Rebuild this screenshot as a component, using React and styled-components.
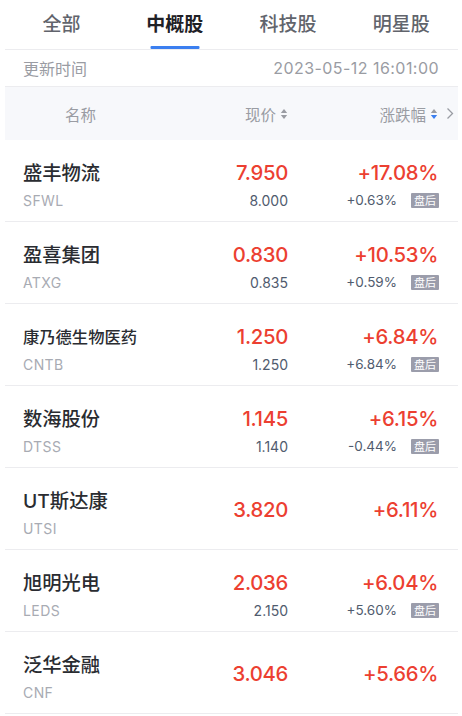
import React from "react";
import styled, { createGlobalStyle } from "styled-components";

const Global = createGlobalStyle`
  html, body { margin: 0; padding: 0; background: #fff; }
  body { font-family: Inter, "Noto Sans CJK SC", sans-serif; -webkit-font-smoothing: antialiased; }
`;

const Page = styled.div`
  margin: 0 4px 0 5px;
`;

const Tabs = styled.div`
  display: grid;
  grid-template-columns: repeat(4, 1fr);
  height: 50px;
  border-bottom: 1px solid #ececef;
  box-sizing: border-box;
`;

const Tab = styled.div`
  position: relative;
  display: flex;
  justify-content: center;
  padding-top: 9px;
  font-size: 19px;
  font-weight: ${(p) => (p.$active ? 600 : 500)};
  color: ${(p) => (p.$active ? "#1f2126" : "#61646c")};
  &::after {
    content: "";
    display: ${(p) => (p.$active ? "block" : "none")};
    position: absolute;
    bottom: 0;
    left: 50%;
    transform: translateX(-50%);
    width: 49px;
    height: 3px;
    border-radius: 1px;
    background: #3b7ff0;
  }
`;

const UpdateBar = styled.div`
  display: flex;
  justify-content: space-between;
  align-items: center;
  height: 36px;
  padding: 0 19px 0 18px;
  border-bottom: 1px solid #ececef;
  font-size: 16px;
  color: #9a9ca3;
`;

const DateText = styled.span`
  font-size: 16px;
  letter-spacing: 0.45px;
`;

const HeaderRow = styled.div`
  display: grid;
  grid-template-columns: 1fr 100px 150px 20px;
  align-items: center;
  height: 53px;
  background: #f7f8fb;
  padding-left: 18px;
  font-size: 15.5px;
  color: #9a9ca3;
`;

const HeadName = styled.div`
  padding-left: 42px;
`;

const HeadCell = styled.div`
  display: flex;
  align-items: center;
  justify-content: flex-end;
  gap: 4px;
`;

const Chevron = styled.div`
  display: flex;
  align-items: center;
  padding-left: 8px;
`;

const SortIcon = ({ active }) => (
  <svg width="8" height="12" viewBox="0 0 8 12">
    <path d="M4 1 L7.2 5 H0.8 Z" fill="#9a9ca3" />
    <path d="M4 11 L7.2 7 H0.8 Z" fill={active ? "#3b7ff0" : "#9a9ca3"} />
  </svg>
);

const Row = styled.div`
  display: grid;
  grid-template-columns: 1fr 100px 150px;
  grid-template-rows: 26px 20px;
  row-gap: 5px;
  padding: 19px 20px 11px 18px;
  border-bottom: 1px solid #ececef;
  height: 82px;
  box-sizing: border-box;
`;

const Name = styled.div`
  grid-column: 1;
  grid-row: 1;
  align-self: center;
  font-size: ${(p) => (p.$small ? "16.3px" : "19.3px")};
  color: #2a2c31;
  font-weight: 500;
  white-space: nowrap;
`;

const Code = styled.div`
  grid-column: 1;
  grid-row: 2;
  align-self: center;
  font-size: 14px;
  color: #a8abb3;
  letter-spacing: 0.4px;
`;

const Main = styled.div`
  grid-column: ${(p) => p.$col};
  grid-row: ${(p) => (p.$span ? "1 / span 2" : "1")};
  align-self: center;
  margin-bottom: ${(p) => (p.$span ? "7px" : "0")};
  text-align: right;
  font-size: 20.3px;
  font-weight: 500;
  letter-spacing: -0.3px;
  color: #ec3f31;
`;

const SubPrice = styled.div`
  grid-column: 2;
  grid-row: 2;
  align-self: center;
  text-align: right;
  font-size: 14px;
  color: #505b6e;
`;

const SubChange = styled.div`
  grid-column: 3;
  grid-row: 2;
  align-self: center;
  display: flex;
  justify-content: flex-end;
  align-items: center;
  gap: 14px;
  font-size: 13.5px;
  color: #505b6e;
`;

const Badge = styled.span`
  display: inline-flex;
  align-items: center;
  justify-content: center;
  width: 28px;
  height: 15px;
  margin-right: -1px;
  background: #9b9dab;
  color: #fff;
  font-size: 11px;
  border-radius: 1px;
`;

const stocks = [
  { name: "盛丰物流", code: "SFWL", price: "7.950", change: "+17.08%", sub: "8.000", subChg: "+0.63%" },
  { name: "盈喜集团", code: "ATXG", price: "0.830", change: "+10.53%", sub: "0.835", subChg: "+0.59%" },
  { name: "康乃德生物医药", code: "CNTB", price: "1.250", change: "+6.84%", sub: "1.250", subChg: "+6.84%", small: true },
  { name: "数海股份", code: "DTSS", price: "1.145", change: "+6.15%", sub: "1.140", subChg: "-0.44%" },
  { name: "UT斯达康", code: "UTSI", price: "3.820", change: "+6.11%" },
  { name: "旭明光电", code: "LEDS", price: "2.036", change: "+6.04%", sub: "2.150", subChg: "+5.60%" },
  { name: "泛华金融", code: "CNF", price: "3.046", change: "+5.66%" },
];

const tabs = ["全部", "中概股", "科技股", "明星股"];

export default function App() {
  return (
    <Page>
      <Global />
      <Tabs>
        {tabs.map((t, i) => (
          <Tab key={t} $active={i === 1}>
            {t}
          </Tab>
        ))}
      </Tabs>
      <UpdateBar>
        <span>更新时间</span>
        <DateText>2023-05-12 16:01:00</DateText>
      </UpdateBar>
      <HeaderRow>
        <HeadName>名称</HeadName>
        <HeadCell>
          现价
          <SortIcon />
        </HeadCell>
        <HeadCell>
          涨跌幅
          <SortIcon active />
        </HeadCell>
        <Chevron>
          <svg width="8" height="13" viewBox="0 0 8 13">
            <path d="M1.5 1.5 L6.5 6.5 L1.5 11.5" fill="none" stroke="#9a9ca3" strokeWidth="1.3" />
          </svg>
        </Chevron>
      </HeaderRow>
      {stocks.map((s) => (
        <Row key={s.code}>
          <Name $small={s.small}>{s.name}</Name>
          <Code>{s.code}</Code>
          <Main $col={2} $span={!s.sub}>{s.price}</Main>
          <Main $col={3} $span={!s.sub}>{s.change}</Main>
          {s.sub && <SubPrice>{s.sub}</SubPrice>}
          {s.sub && (
            <SubChange>
              {s.subChg}
              <Badge>盘后</Badge>
            </SubChange>
          )}
        </Row>
      ))}
    </Page>
  );
}
